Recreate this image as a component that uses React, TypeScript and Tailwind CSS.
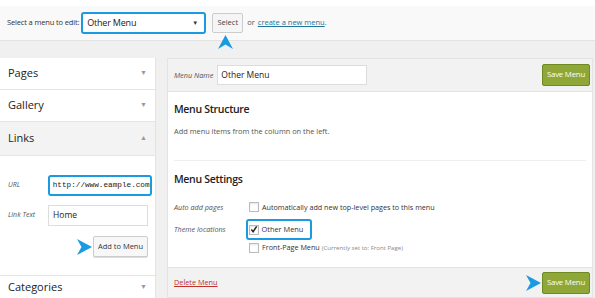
import React from 'react';

const Arrow: React.FC<{ dir: 'up' | 'right'; className?: string }> = ({ dir, className }) =>
  dir === 'up' ? (
    <svg width="15" height="14" viewBox="0 0 15 14" className={className}>
      <path d="M7.5 0 L15 14 L7.5 9.5 L0 14 Z" fill="#1a9ae0" />
    </svg>
  ) : (
    <svg width="15" height="16" viewBox="0 0 15 16" className={className}>
      <path d="M0 0 L15 8 L0 16 L4.5 8 Z" fill="#1a9ae0" />
    </svg>
  );

const Caret: React.FC<{ up?: boolean }> = ({ up }) => (
  <span className="text-[7px] text-[#999]">{up ? '▲' : '▼'}</span>
);

const Checkbox: React.FC<{ checked?: boolean }> = ({ checked }) => (
  <span className="w-[10px] h-[10px] border border-[#bbb] bg-white flex items-center justify-center shrink-0 shadow-[inset_0_1px_2px_rgba(0,0,0,0.1)]">
    {checked && (
      <svg width="9" height="9" viewBox="0 0 9 9">
        <path d="M1.5 4.5 L3.5 7 L7.5 1" stroke="#222" strokeWidth="1.6" fill="none" />
      </svg>
    )}
  </span>
);

const App: React.FC = () => {
  return (
    <div className="w-[595px] h-[298px] bg-white overflow-hidden text-[#333]" style={{ fontFamily: '"Open Sans", sans-serif' }}>
      {/* Menu picker */}
      <div className="mt-[6px] h-[35px] bg-[#f9f9f9] border-b border-[#e3e3e3] flex items-center pl-[7px] text-[7.5px] relative">
        <span className="text-[#333] tracking-[-0.15px]">Select a menu to edit:</span>
        <div className="ml-[2px] w-[125px] h-[22px] border-[2.5px] border-[#1a9ae0] rounded-[3px] bg-white flex items-center justify-between pl-[4px] pr-[6px]">
          <span className="text-[9px] tracking-[-0.2px] text-[#222]">Other Menu</span>
          <span className="text-[6px] text-[#333]">▼</span>
        </div>
        <button className="ml-[6px] w-[31px] h-[20px] border border-[#ccc] rounded-[2px] bg-[#f5f5f5] text-[7.5px] text-[#444]">Select</button>
        <span className="ml-[4px] text-[#555]">or</span>
        <a className="ml-[3px] text-[#21759b] underline">create a new menu</a>
        <span className="text-[#555]">.</span>
        <Arrow dir="up" className="absolute left-[218px] top-[29px]" />
      </div>

      <div className="bg-[#f0f0f0] h-[257px] pt-[17px] flex">
        {/* Left column */}
        <div className="w-[156px] bg-white border-r border-[#e3e3e3] flex flex-col">
          <div className="h-[32px] border-b border-[#e5e5e5] flex items-center justify-between pl-[8px] pr-[8px]">
            <span className="text-[11px] text-[#222]">Pages</span>
            <Caret />
          </div>
          <div className="h-[32px] border-b border-[#e5e5e5] flex items-center justify-between pl-[8px] pr-[8px]">
            <span className="text-[11px] text-[#222]">Gallery</span>
            <Caret />
          </div>
          <div className="h-[34px] bg-[#f3f3f3] border-b border-[#e5e5e5] flex items-center justify-between pl-[8px] pr-[8px]">
            <span className="text-[11px] text-[#222]">Links</span>
            <Caret up />
          </div>
          <div className="h-[120px] border-b border-[#e5e5e5] flex flex-col pt-[19px] pl-[8px] pr-[3px]">
            <div className="flex items-center">
              <span className="w-[40px] text-[7px] italic text-[#555]">URL</span>
              <div className="w-[105px] h-[21px] border-[2.5px] border-[#1a9ae0] rounded-[3px] bg-white flex items-center pl-[3px] text-[7.7px] text-[#222] whitespace-nowrap overflow-hidden" style={{ fontFamily: '"Liberation Mono", monospace' }}>
                http://www.eample.com
              </div>
            </div>
            <div className="flex items-center mt-[9px]">
              <span className="w-[40px] text-[7px] italic text-[#555]">Link Text</span>
              <div className="w-[100px] h-[21px] border border-[#ddd] bg-white flex items-center pl-[4px] text-[8.5px] text-[#222]">Home</div>
            </div>
            <div className="flex items-center justify-end mt-[10px] pr-[4px]">
              <Arrow dir="right" className="mr-[1px]" />
              <button className="w-[55px] h-[21px] border border-[#ccc] rounded-[2px] bg-[#f7f7f7] text-[7.5px] text-[#333] shadow-[0_1px_0_#ddd]">Add to Menu</button>
            </div>
          </div>
          <div className="flex-1 flex items-center justify-between pl-[8px] pr-[8px]">
            <span className="text-[11px] text-[#222]">Categories</span>
            <Caret />
          </div>
        </div>

        {/* Right panel */}
        <div className="ml-[11px] w-[426px] bg-white border border-[#e3e3e3] flex flex-col">
          <div className="h-[33px] bg-[#f2f2f2] border-b border-[#e3e3e3] flex items-center pl-[6px] pr-[2px]">
            <span className="text-[7.3px] italic text-[#555]">Menu Name</span>
            <div className="ml-[4px] w-[150px] h-[20px] border border-[#ddd] bg-white flex items-center pl-[3px] text-[8.5px] text-[#222]">Other Menu</div>
            <button className="ml-auto w-[48px] h-[22px] rounded-[2px] bg-[#8ea736] border border-[#6f8a22] text-white text-[7.8px] tracking-[-0.2px]">Save Menu</button>
          </div>
          <div className="flex-1 flex flex-col px-[6px]">
            <div className="pt-[10px] text-[10.5px] font-semibold tracking-[-0.3px] text-[#222]">Menu Structure</div>
            <div className="mt-[8px] text-[7.4px] text-[#555]">Add menu items from the column on the left.</div>
            <div className="mt-[23px] border-t border-[#eee]" />
            <div className="pt-[11px] text-[10.5px] font-semibold tracking-[-0.3px] text-[#222]">Menu Settings</div>
            <div className="mt-[14px] flex items-center">
              <span className="w-[75px] text-[7.2px] italic text-[#555]">Auto add pages</span>
              <Checkbox />
              <span className="ml-[3px] text-[7.2px] text-[#333]">Automatically add new top-level pages to this menu</span>
            </div>
            <div className="mt-[7px] flex items-start">
              <span className="w-[72px] text-[7.2px] italic text-[#555] pt-[5px]">Theme locations</span>
              <div className="flex flex-col">
                <div className="w-[66px] h-[21px] border-[2.5px] border-[#1a9ae0] rounded-[3px] flex items-center pl-[0.5px]">
                  <Checkbox checked />
                  <span className="ml-[3px] text-[7.4px] whitespace-nowrap text-[#333]">Other Menu</span>
                </div>
                <div className="flex items-center mt-[2px] pl-[3px]">
                  <Checkbox />
                  <span className="ml-[3px] text-[7.2px] text-[#333]">Front-Page Menu</span>
                  <span className="ml-[2px] text-[6.1px] text-[#888]">(Currently set to: Front Page)</span>
                </div>
              </div>
            </div>
          </div>
          <div className="h-[30px] bg-[#f2f2f2] border-t border-[#e3e3e3] flex items-center pl-[6px] pr-[2px]">
            <a className="text-[7.3px] text-[#c0312b] underline">Delete Menu</a>
            <Arrow dir="right" className="ml-auto mr-[1px]" />
            <button className="w-[48px] h-[22px] rounded-[2px] bg-[#8ea736] border border-[#6f8a22] text-white text-[7.8px] tracking-[-0.2px]">Save Menu</button>
          </div>
        </div>
      </div>
    </div>
  );
};

export default App;
